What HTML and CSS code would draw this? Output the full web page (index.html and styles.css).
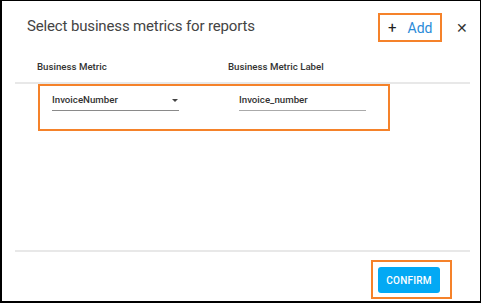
FILE: index.html
```html
<!DOCTYPE html>
<html lang="en">
<head>
    <meta charset="UTF-8">
    <meta name="viewport" content="width=device-width, initial-scale=1.0">
    <title>Select business metrics</title>
    <link rel="stylesheet" href="styles.css">
</head>
<body>
    <div class="dialog">
        <div class="dialog-header">
            <h1 class="dialog-title">Select business metrics for reports</h1>
            <div class="add-box">
                <button class="add-button"><span class="plus">+</span>Add</button>
            </div>
            <button class="close-button">&#x2715;</button>
        </div>

        <div class="columns">
            <div class="col col-metric">Business Metric</div>
            <div class="col col-label">Business Metric Label</div>
        </div>
        <div class="divider"></div>

        <div class="metric-row">
            <div class="field select-field">
                <span>InvoiceNumber</span>
                <span class="arrow"></span>
            </div>
            <div class="field label-field">
                <span>Invoice_number</span>
            </div>
        </div>

        <div class="spacer"></div>
        <div class="divider"></div>

        <div class="dialog-footer">
            <div class="confirm-box">
                <button class="confirm-button">CONFIRM</button>
            </div>
        </div>
    </div>
</body>
</html>
```

FILE: styles.css
```css
body {
    margin: 0;
    padding: 0;
    font-family: Roboto, "Liberation Sans", Arial, sans-serif;
    background-color: #fff;
}

.dialog {
    width: 481px;
    height: 303px;
    box-sizing: border-box;
    border: 1px solid #000;
    border-left-width: 2px;
    border-bottom-width: 2px;
    background: #fff;
    display: flex;
    flex-direction: column;
}

.dialog-header {
    display: flex;
    align-items: center;
    height: 29px;
    margin-top: 12px;
    padding-left: 25px;
    padding-right: 12px;
}

.dialog-title {
    flex: 1;
    margin: 0;
    font-size: 15px;
    font-weight: 400;
    letter-spacing: -0.15px;
    color: #444;
    line-height: 20px;
    margin-top: -4px;
}

.add-box {
    flex-shrink: 0;
    width: 64px;
    height: 29px;
    box-sizing: border-box;
    border: 2px solid #f5822a;
    display: flex;
    align-items: center;
}

button {
    font-family: inherit;
    border: none;
    background: none;
    padding: 0;
    cursor: pointer;
}

.add-button {
    font-size: 14px;
    color: #2a8ad8;
    display: flex;
    align-items: center;
    margin-left: 8px;
}

.plus {
    color: #222;
    font-size: 15px;
    margin-right: 11px;
}

.close-button {
    flex-shrink: 0;
    font-size: 14px;
    line-height: 14px;
    color: #333;
    margin-left: 14px;
    margin-top: 1px;
}

.columns {
    display: flex;
    height: 14px;
    margin-top: 18px;
    padding-left: 35px;
    font-size: 9.7px;
    font-weight: 500;
    color: #333;
    line-height: 14px;
}

.col-metric {
    width: 191px;
}

.divider {
    height: 2px;
    margin: 8px 10px 0 13px;
    background: #e8e8e8;
}

.metric-row {
    width: 352px;
    height: 47px;
    box-sizing: border-box;
    margin-left: 36px;
    border: 2px solid #f5822a;
    display: flex;
    align-items: flex-start;
    padding-left: 12px;
}

.field {
    width: 127px;
    box-sizing: border-box;
    margin-top: 6px;
    padding-bottom: 2px;
    border-bottom: 1px solid #8a8a8a;
    font-size: 9.7px;
    font-weight: 500;
    color: #333;
    line-height: 16px;
    display: flex;
    justify-content: space-between;
    align-items: center;
}

.label-field {
    margin-left: 60px;
    border-bottom-color: #aaa;
}

.arrow {
    width: 0;
    height: 0;
    border-left: 3px solid transparent;
    border-right: 3px solid transparent;
    border-top: 3px solid #444;
    margin-right: 1px;
}

.spacer {
    flex: 1;
}

.dialog-footer {
    display: flex;
    justify-content: flex-end;
    padding-right: 28px;
    margin-top: 8px;
    margin-bottom: 2px;
}

.confirm-box {
    border: 2px solid #f5822a;
    padding: 5px 10px 4px 5px;
}

.confirm-button {
    width: 62px;
    height: 26px;
    border-radius: 3px;
    background: #03a9f4;
    color: #fff;
    font-size: 10px;
    font-weight: 500;
    letter-spacing: 0.2px;
}
```
